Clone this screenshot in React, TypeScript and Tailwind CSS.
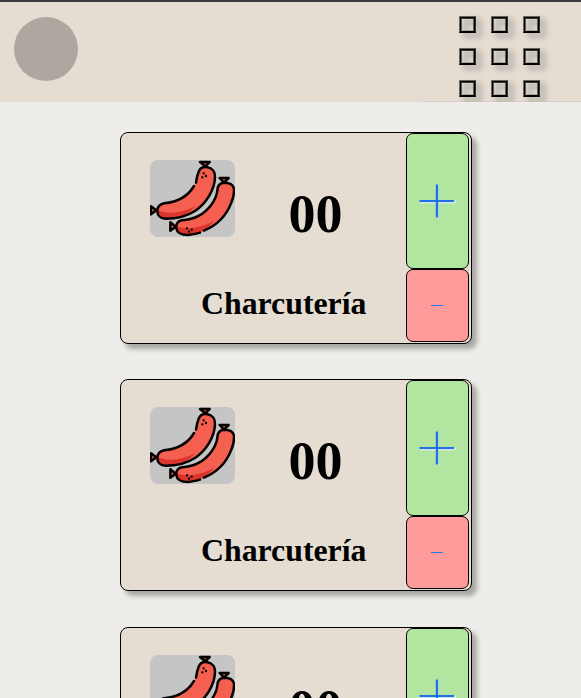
function Sausages() {
  return (
    <svg viewBox="30 30 255 231" className="block h-full w-full" fill="none" stroke="#050202" strokeWidth="7.5" strokeLinecap="round" strokeLinejoin="round">
      <path d="M180 36H209L196 49Z M239 84H266L252 98Z M33 169V193L49 181Z M91 217V242L107 230Z" fill="#f45f50" strokeWidth="7.5" />
      <path d="M168 98C170 82 173 72 176 65C181 53 193 50 203 52C218 55 226 67 225 82C224 119 199 160 166 182C137 201 102 206 77 206C61 206 52 196 52 183C52 169 60 163 72 160C112 156 145 140 164 106Z" fill="#f45f50" stroke="none" />
      <path d="M54 181C88 197 137 184 166 167C153 190 108 206 77 206C60 206 53 196 54 181Z" fill="#dc352d" stroke="none" />
      <path d="M168 98C170 82 173 72 176 65C181 53 193 50 203 52C218 55 226 67 225 82C224 119 199 160 166 182C137 201 102 206 77 206C61 206 52 196 52 183C52 169 60 163 72 160C112 156 144 139 162 108" />
      <path d="M182 246C222 231 259 198 274 158C281 141 283 129 282 116C279 100 265 98 253 98C239 99 232 109 232 122C229 151 204 182 177 197C157 208 143 210 126 211C113 213 107 222 109 235C111 250 127 255 145 255C159 254 171 251 182 246Z" fill="#f45f50" stroke="none" />
      <path d="M111 229C145 243 193 230 223 211C207 235 180 254 145 255C124 255 110 250 111 229Z" fill="#dc352d" stroke="none" />
      <path d="M192 242C228 227 259 198 274 158C281 141 283 129 282 116C279 100 265 98 253 98C239 99 232 109 232 122C229 151 204 182 177 197C157 208 143 210 126 211C113 213 107 222 109 235C111 250 127 255 145 255C158 254 169 251 180 248" />
      <path d="M191 70v.1M198 78v.1M187 82v.1M141 235v.1M155 239v.1M147 245v.1" strokeWidth="7" />
    </svg>
  );
}

function Card() {
  return (
    <article className="flex h-[212px] w-[352px] shrink-0 justify-between rounded-[8px] border border-black bg-[#e5ddd2] pr-[2px] shadow-[5px_5px_5px_rgba(0,0,0,0.3)]">
      <div className="w-[285px]">
        <div className="flex pt-[27px] pl-[29px]">
          <div className="h-[77px] w-[85px] overflow-hidden rounded-[8px] bg-[#c5c5c5]">
            <Sausages />
          </div>
          <span className="mt-[23px] ml-[53.5px] text-[54px] leading-[62px] font-bold">00</span>
        </div>
        <h2 className="mt-[41px] ml-[80px] text-[31.8px] leading-[36px] font-bold">Charcutería</h2>
      </div>
      <div className="flex w-[63px] flex-col">
        <button className="flex h-[136px] items-center justify-center rounded-[7px] border border-black bg-[#b2e6a0] pr-px">
          <svg viewBox="0 0 38 36" className="h-[36px] w-[38px] shrink-0" fill="none">
            <path d="M3 19H36.5M19.5 3V34" stroke="#cfeae6" strokeWidth="3" strokeLinecap="round" />
            <path d="M1.5 18H36" stroke="#236fe8" strokeWidth="2.2" />
            <path d="M19 1.5V34.5" stroke="#236fe8" strokeWidth="2.4" />
          </svg>
        </button>
        <button className="flex h-[73px] items-center justify-center rounded-[7px] border border-black bg-[#ff9c9b] pr-[2px]">
          <span className="h-px w-3 bg-[#2878ee]" />
        </button>
      </div>
    </article>
  );
}

export default function App() {
  return (
    <div className="h-[698px] w-full overflow-hidden bg-[#eeede9] font-['Liberation_Serif',serif] text-black">
      <header className="flex h-[102px] items-start justify-between overflow-hidden border-t-2 border-[#393939] bg-[#e5ddd2]">
        <div className="mt-[15px] ml-[14px] size-16 rounded-full bg-[#aea69f]" />
        <div className="flex h-[100px] w-[166px] rounded-bl-[8px] border-b border-[#d9d2c8] pt-[14px] pl-[44px]">
          <div className="grid h-[81px] grid-cols-3 gap-[15px] drop-shadow-[5px_4px_3px_rgba(0,0,0,0.3)]">
            {Array.from({ length: 9 }, (_, i) => (
              <div key={i} className="size-[17px] border border-t-[#696a60] border-r-[#303331] border-b-black border-l-[#696a60]">
                <div className="size-[15px] border border-black">
                  <div className="size-[13px] border border-t-[#343a38] border-r-[#5c5f5b] border-b-[#a5a199] border-l-[#545a57]" />
                </div>
              </div>
            ))}
          </div>
        </div>
      </header>
      <main className="flex flex-col gap-[35.4px] pt-[30px] pl-[120px]">
        <Card />
        <Card />
        <div className="mt-[0.2px]">
          <Card />
        </div>
      </main>
    </div>
  );
}
